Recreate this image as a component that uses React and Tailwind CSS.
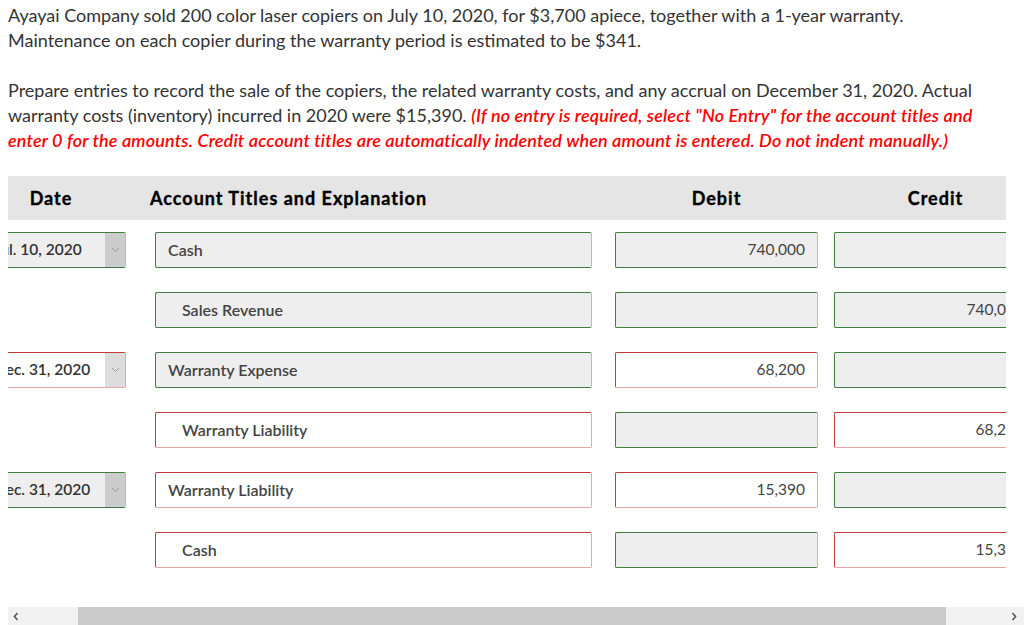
import React from "react";

const green = "border border-[#3f7f3f] border-r-[#a5c8a5] bg-[#eeeeee]";
const red = "border border-[#c23b3b] border-r-[#e4a7a7] border-b-[#e4a7a7] bg-white";

function Chevron() {
  return (
    <svg width="9" height="6" viewBox="0 0 9 6">
      <path d="M1 1 L4.5 4.5 L8 1" fill="none" stroke="#999" strokeWidth="1" />
    </svg>
  );
}

function Arrow({ dir }) {
  return (
    <svg width="6" height="9" viewBox="0 0 6 9">
      <path
        d={dir === "left" ? "M4.5 1 L1.5 4.5 L4.5 8" : "M1.5 1 L4.5 4.5 L1.5 8"}
        fill="none"
        stroke="#555"
        strokeWidth="1.6"
      />
    </svg>
  );
}

function DateBox({ text, ok }) {
  return (
    <div
      className={`-ml-[20px] w-[138px] h-[36px] shrink-0 flex rounded-[2px] overflow-hidden ${
        ok ? green : red
      }`}
    >
      <div className="flex-1 flex items-center pl-[5px] text-[15.5px] font-semibold text-[#333] whitespace-nowrap">
        {text}
      </div>
      <div
        className={`w-[20px] flex items-center justify-center ${
          ok ? "bg-[#cccccc]" : "bg-[#dddddd]"
        }`}
      >
        <Chevron />
      </div>
    </div>
  );
}

function Row({ date, account, indent, accOk, debit, debitOk, credit, creditOk }) {
  return (
    <div className="flex h-[36px]">
      {date ? (
        <DateBox text={date.text} ok={date.ok} />
      ) : (
        <div className="-ml-[20px] w-[138px] shrink-0" />
      )}
      <div
        className={`ml-[29px] w-[437px] shrink-0 rounded-[2px] flex items-center text-[16px] font-semibold text-[#444] ${
          indent ? "pl-[26px]" : "pl-[12px]"
        } ${accOk ? green : red}`}
      >
        {account}
      </div>
      <div
        className={`ml-[23px] w-[203px] shrink-0 rounded-[2px] flex items-center justify-end pr-[12px] text-[15.5px] text-[#444] ${
          debitOk ? green : red
        }`}
      >
        {debit}
      </div>
      <div
        className={`ml-[16px] w-[203px] shrink-0 rounded-[2px] flex items-center justify-end pr-[12px] text-[15.5px] text-[#444] ${
          creditOk ? green : red
        }`}
      >
        {credit}
      </div>
    </div>
  );
}

export default function App() {
  const rows = [
    { date: { text: "Jul. 10, 2020", ok: true }, account: "Cash", accOk: true, debit: "740,000", debitOk: true, credit: "", creditOk: true },
    { account: "Sales Revenue", indent: true, accOk: true, debit: "", debitOk: true, credit: "740,000", creditOk: true },
    { date: { text: "Dec. 31, 2020", ok: false }, account: "Warranty Expense", accOk: true, debit: "68,200", debitOk: false, credit: "", creditOk: true },
    { account: "Warranty Liability", indent: true, accOk: false, debit: "", debitOk: true, credit: "68,200", creditOk: false },
    { date: { text: "Dec. 31, 2020", ok: true }, account: "Warranty Liability", accOk: false, debit: "15,390", debitOk: false, credit: "", creditOk: true },
    { account: "Cash", indent: true, accOk: false, debit: "", debitOk: true, credit: "15,390", creditOk: false },
  ];
  return (
    <div className="w-[1024px] h-[625px] overflow-hidden bg-white font-['Lato',sans-serif] text-[#333] flex flex-col">
      <div className="px-[8px] pt-[3px] text-[18px] leading-[25px]">
        <p>
          Ayayai Company sold 200 color laser copiers on July 10, 2020, for $3,700 apiece, together with a 1-year warranty.
          <br />
          Maintenance on each copier during the warranty period is estimated to be $341.
        </p>
        <p className="mt-[25px] pr-[40px]">
          Prepare entries to record the sale of the copiers, the related warranty costs, and any accrual on December 31, 2020. Actual warranty costs (inventory) incurred in 2020 were $15,390.{" "}
          <span className="text-[#ff0000] italic font-semibold tracking-[0.15px]">
            (If no entry is required, select "No Entry" for the account titles and enter 0 for the amounts. Credit account titles are automatically indented when amount is entered. Do not indent manually.)
          </span>
        </p>
      </div>
      <div className="ml-[8px] mt-[23px] w-[998px] overflow-hidden">
        <div className="flex h-[44px] items-center bg-[#e5e5e5] text-[18px] font-bold tracking-[1px] [-webkit-text-stroke:0.35px_black] text-black">
          <div className="w-[86px] shrink-0 text-center">Date</div>
          <div className="ml-[56px] w-[465px] shrink-0">Account Titles and Explanation</div>
          <div className="w-[203px] shrink-0 text-center">Debit</div>
          <div className="ml-[16px] w-[203px] shrink-0 text-center">Credit</div>
        </div>
        <div className="flex flex-col gap-[24px] pt-[12px]">
          {rows.map((r, i) => (
            <div key={i} className="pl-[20px] -ml-[20px]">
              <Row {...r} />
            </div>
          ))}
        </div>
      </div>
      <div className="mt-auto ml-[8px] h-[18px] flex bg-[#f1f1f1]">
        <div className="w-[70px] flex items-center pl-[5px]">
          <Arrow dir="left" />
        </div>
        <div className="w-[868px] bg-[#cccccc]" />
        <div className="flex-1 flex items-center justify-end pr-[7px]">
          <Arrow dir="right" />
        </div>
      </div>
    </div>
  );
}
